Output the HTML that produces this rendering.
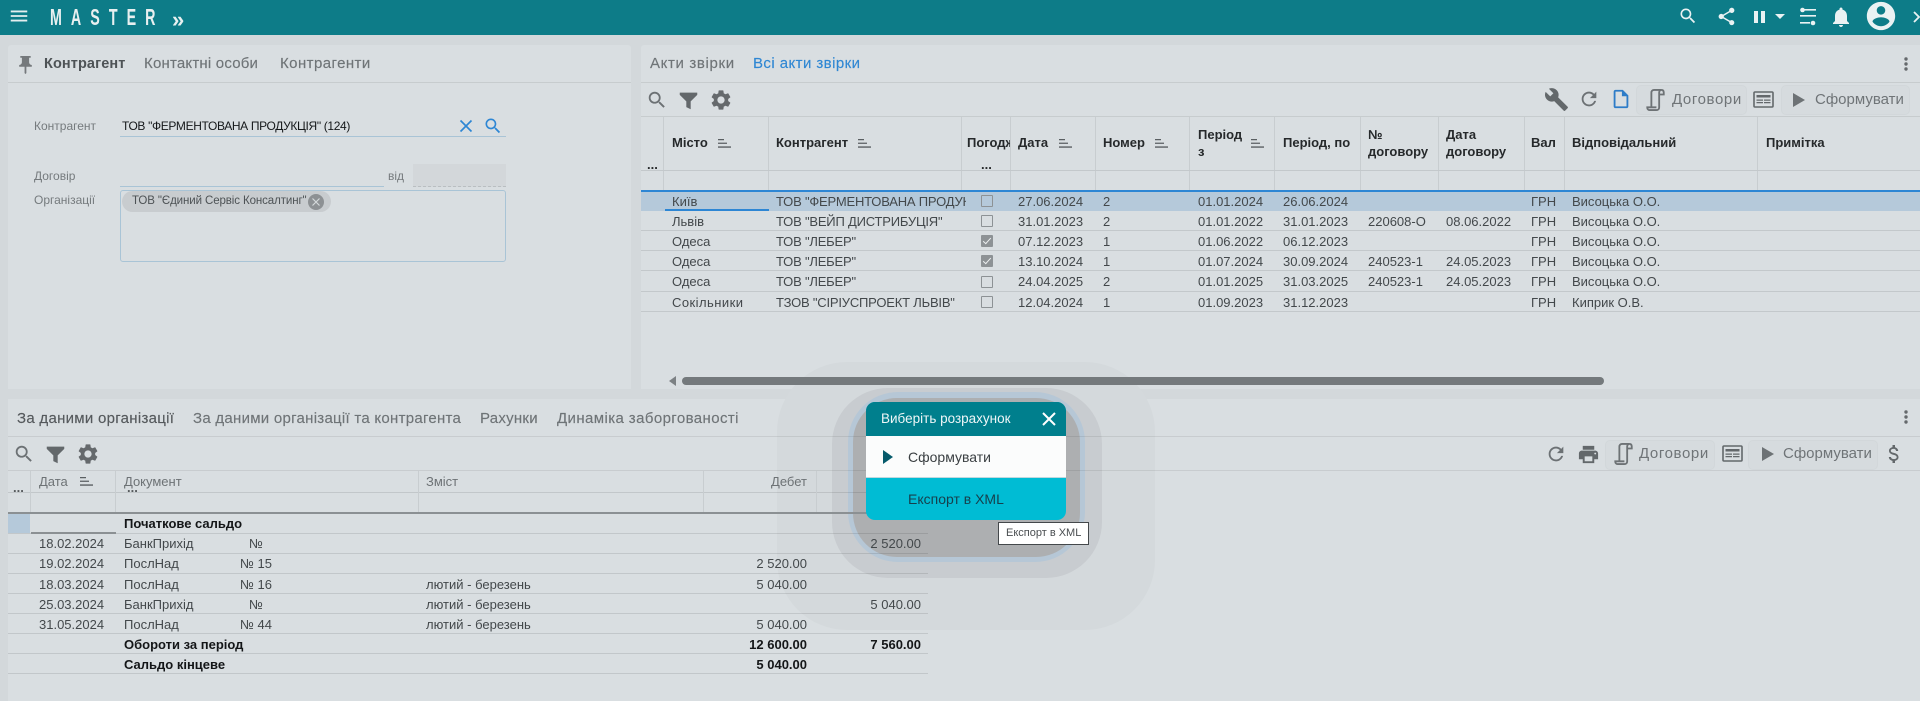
<!DOCTYPE html>
<html><head><meta charset="utf-8"><style>
html,body{margin:0;padding:0;width:1920px;height:701px;overflow:hidden;background:#d3d8db;font-family:"Liberation Sans",sans-serif}
.a{position:absolute}
.t{position:absolute;white-space:nowrap;line-height:16px;height:16px}
svg{position:absolute;overflow:visible}
.tab{font-size:15px;color:#6f7477;line-height:20px;height:20px;letter-spacing:.1px;-webkit-text-stroke:.15px currentColor}
.h{font-size:13px;font-weight:bold;color:#26292b}
.row{position:absolute;left:641px;width:1279px;height:20px;border-bottom:1px solid #c3c8cb;box-sizing:border-box}
.row span{position:absolute;top:3px;font-size:13px;line-height:16px;color:#43484b;white-space:nowrap}
.c1{left:31px}.c2{left:135px;width:190px;overflow:hidden;letter-spacing:-.2px}.c4{left:377px}.c5{left:462px}.c6{left:557px}.c7{left:642px}.c8{left:727px}.c9{left:805px}.c10{left:890px}.c11{left:931px}
.cb{position:absolute;left:340px;top:4px;width:10px;height:10px;border:1px solid #8d9295;border-radius:1px}
.cb.on{background:#8d9295}
.cb.on::after{content:"";position:absolute;left:3px;top:0;width:3px;height:7px;border:solid #eef1f2;border-width:0 1.5px 1.5px 0;transform:rotate(42deg)}
.row2{position:absolute;left:8px;width:920px;height:20px;border-bottom:1px solid rgba(0,0,0,.1);box-sizing:border-box}
.row2 span{position:absolute;top:2px;font-size:13px;line-height:16px;color:#43484b;white-space:nowrap}
.row2 b{position:absolute;top:2px;font-size:13px;line-height:16px;color:#141618;white-space:nowrap}
.d{left:31px}.e{left:116px}.f{left:218px;width:60px;text-align:center}.g{left:418px}.r1{right:121px}.r2{right:7px}
.sep{position:absolute;width:1px;background:#c8cdd0}
.btn{position:absolute;background:#d6dbde;border:1px solid #d2d7da;border-radius:5px;box-sizing:border-box}
</style></head><body>
<svg width="0" height="0" style="position:absolute"><defs>
<symbol id="sort" viewBox="0 0 13 9"><path d="M0 0h6v1.3H0zM0 3.6h9v1.3H0zM0 7.4h13v1.3H0z" fill="#5a5f62"/></symbol>
<symbol id="srch" viewBox="0 0 24 24"><path d="M15.5 14h-.79l-.28-.27C15.41 12.59 16 11.11 16 9.5 16 5.91 13.09 3 9.5 3S3 5.91 3 9.5 5.91 16 9.5 16c1.61 0 3.09-.59 4.23-1.57l.27.28v.79l5 4.99L20.49 19l-4.99-5zm-6 0C7.01 14 5 11.99 5 9.5S7.01 5 9.5 5 14 7.01 14 9.5 11.99 14 9.5 14z"/></symbol>
<symbol id="gear" viewBox="0 0 24 24"><path d="M19.14 12.94c.04-.3.06-.61.06-.94 0-.32-.02-.64-.07-.94l2.03-1.58a.49.49 0 0 0 .12-.61l-1.92-3.32a.488.488 0 0 0-.59-.22l-2.39.96c-.5-.38-1.03-.7-1.62-.94l-.36-2.54a.484.484 0 0 0-.48-.41h-3.84c-.24 0-.43.17-.47.41l-.36 2.54c-.59.24-1.13.57-1.62.94l-2.39-.96c-.22-.08-.47 0-.59.22L2.74 8.87c-.12.21-.08.47.12.61l2.03 1.58c-.05.3-.09.63-.09.94s.02.64.07.94l-2.03 1.58a.49.49 0 0 0-.12.61l1.92 3.32c.12.22.37.29.59.22l2.39-.96c.5.38 1.03.7 1.62.94l.36 2.54c.05.24.24.41.48.41h3.84c.24 0 .44-.17.47-.41l.36-2.54c.59-.24 1.13-.56 1.62-.94l2.39.96c.22.08.47 0 .59-.22l1.92-3.32c.12-.22.07-.47-.12-.61l-2.01-1.58zM12 15.6c-1.98 0-3.6-1.62-3.6-3.6s1.62-3.6 3.6-3.6 3.6 1.62 3.6 3.6-1.62 3.6-3.6 3.6z"/></symbol>
<symbol id="fun" viewBox="0 0 24 24"><path d="M2 3h20v2.5L14.5 13v9l-5-2.5V13L2 5.500z"/></symbol>
<symbol id="refr" viewBox="0 0 24 24"><path d="M17.65 6.35C16.2 4.9 14.21 4 12 4c-4.42 0-7.99 3.58-7.99 8s3.57 8 7.99 8c3.730 0 6.84-2.55 7.73-6h-2.08c-.82 2.33-3.04 4-5.65 4-3.31 0-6-2.69-6-6s2.69-6 6-6c1.66 0 3.14.69 4.22 1.78L13 11h7V4l-2.35 2.35z"/></symbol>
<symbol id="scrl" viewBox="0 0 19 24"><path d="M5 20V4c0-1.500 1-3 3-3h8c-1.500 0-2.500 1.500-2.500 3v16c0 1.600-1 3-3 3H3c-1.500 0-2.500-1.200-2.500-3H10.500" fill="none" stroke="#6d7275" stroke-width="2"/><path d="M16 1c1.500 0 2.500 1 2.500 3v2h-5" fill="none" stroke="#6d7275" stroke-width="2"/></symbol>
<symbol id="news" viewBox="0 0 21 17"><rect x="1" y="1" width="19" height="15" rx="1" fill="none" stroke="#63686b" stroke-width="1.600"/><path d="M3.500 4h14v2.500h-14zM3.500 8.500h6.500v1.200H3.500zM3.500 11h6.500v1.200H3.500zM11 8.500h6.500v1.200H11zM11 11h6.500v1.200H11z" fill="#63686b"/></symbol>
<symbol id="dots" viewBox="0 0 4 14"><circle cx="2" cy="2" r="1.700"/><circle cx="2" cy="7" r="1.700"/><circle cx="2" cy="12" r="1.700"/></symbol>
</defs></svg>

<!-- top bar -->
<div class="a" style="left:0;top:0;width:1920px;height:35px;background:#0d7c88"></div>
<svg style="left:8px;top:5px" width="22" height="22" viewBox="0 0 24 24" fill="#e4eeef"><path d="M3 18h18v-2H3v2zm0-5h18v-2H3v2zm0-7v2h18V6H3z"/></svg>
<div class="t" style="left:50px;top:5px;height:24px;line-height:24px;font-size:23px;color:#e8f0f0;font-weight:bold;transform:scaleX(.62);transform-origin:left;letter-spacing:14.6px;width:180px">MASTER</div>
<div class="t" style="left:172px;top:8px;height:24px;line-height:24px;font-size:22px;font-weight:bold;color:#e8f0f0">»</div>
<svg style="left:1678px;top:6px;fill:#eaf2f3" width="20" height="20"><use href="#srch"/></svg>
<svg style="left:1716px;top:6px" width="21" height="21" viewBox="0 0 24 24" fill="#eaf2f3"><path d="M18 16.080c-.76 0-1.440.3-1.960.77L8.910 12.700c.05-.23.09-.46.09-.7s-.04-.47-.09-.7l7.050-4.110c.54.5 1.250.81 2.040.81 1.660 0 3-1.340 3-3s-1.340-3-3-3-3 1.340-3 3c0 .24.04.47.09.7L8.040 9.810C7.500 9.310 6.790 9 6 9c-1.660 0-3 1.340-3 3s1.340 3 3 3c.79 0 1.500-.31 2.040-.81l7.120 4.160c-.05.21-.08.43-.08.65 0 1.610 1.310 2.920 2.920 2.920 1.610 0 2.920-1.310 2.920-2.920s-1.310-2.920-2.920-2.920z"/></svg>
<div class="a" style="left:1754px;top:11px;width:4px;height:12px;background:#eaf2f3"></div>
<div class="a" style="left:1761px;top:11px;width:4px;height:12px;background:#eaf2f3"></div>
<svg style="left:1775px;top:14px" width="10" height="5" fill="#eaf2f3"><path d="M0 0h10L5 5z"/></svg>
<svg style="left:1800px;top:8px" width="16" height="18" fill="#eaf2f3"><path d="M4 1h12v1.600H4zM0 7h16v1.600H0zM0 14h10v1.600H0z"/><circle cx="2.500" cy="2" r="2.300"/><circle cx="13" cy="15" r="2.300"/></svg>
<svg style="left:1831px;top:6px" width="20" height="22" viewBox="2 1 20 22" fill="#eaf2f3"><path d="M12 22c1.100 0 2-.9 2-2h-4c0 1.100.89 2 2 2zm6-6v-5c0-3.070-1.640-5.640-4.500-6.320V4c0-.83-.67-1.500-1.500-1.500s-1.500.67-1.500 1.500v.68C7.630 5.360 6 7.920 6 11v5l-2 2v1h16v-1l-2-2z"/></svg>
<svg style="left:1864px;top:-1px" width="34" height="34" viewBox="0 0 24 24" fill="#eaf2f3"><path d="M12 2C6.480 2 2 6.480 2 12s4.480 10 10 10 10-4.480 10-10S17.520 2 12 2zm0 3c1.660 0 3 1.340 3 3s-1.340 3-3 3-3-1.340-3-3 1.340-3 3-3zm0 14.200c-2.500 0-4.710-1.280-6-3.220.03-1.990 4-3.080 6-3.080 1.990 0 5.970 1.090 6 3.080-1.290 1.940-3.500 3.220-6 3.220z"/></svg>
<svg style="left:1913px;top:11px" width="7" height="12" fill="none" stroke="#eaf2f3" stroke-width="1.800"><path d="M1 1l5 5-5 5"/></svg>

<!-- left panel -->
<div class="a" style="left:8px;top:45px;width:623px;height:344px;background:#d9dee1;border-radius:3px 3px 0 0"></div>
<div class="a" style="left:8px;top:82px;width:623px;height:1px;background:#c7ccce"></div>
<svg style="left:18px;top:56px" width="15" height="18" viewBox="5 2 14 20" fill="#75797c"><path d="M16 9V4h1c.55 0 1-.45 1-1s-.45-1-1-1H7c-.55 0-1 .45-1 1s.45 1 1 1h1v5c0 1.660-1.340 3-3 3v2h5.970v7l1 1 1-1v-7H19v-2c-1.660 0-3-1.340-3-3z"/></svg>
<div class="t tab" style="left:44px;top:54px;color:#4e5356;font-weight:bold;font-size:14.500px;-webkit-text-stroke:0">Контрагент</div>
<div class="t tab" style="left:144px;top:54px;letter-spacing:.2px">Контактні особи</div>
<div class="t tab" style="left:280px;top:54px;letter-spacing:.43px">Контрагенти</div>
<div class="t" style="left:34px;top:118px;font-size:12px;color:#757a7d">Контрагент</div>
<div class="t" style="left:122px;top:118px;font-size:12px;letter-spacing:-.35px;color:#15181a">ТОВ "ФЕРМЕНТОВАНА ПРОДУКЦІЯ" (124)</div>
<div class="a" style="left:120px;top:136px;width:386px;height:1px;background:#a9c4d6"></div>
<svg style="left:460px;top:120px" width="12" height="12" stroke="#2d86d4" stroke-width="1.700" fill="none"><path d="M.5.5l11 11M11.500.5l-11 11"/></svg>
<svg style="left:483px;top:116px;fill:#2d86d4" width="20" height="20"><use href="#srch"/></svg>
<div class="t" style="left:34px;top:168px;font-size:12px;color:#757a7d">Договір</div>
<div class="a" style="left:120px;top:186px;width:264px;height:1px;background:#a9c4d6"></div>
<div class="t" style="left:388px;top:168px;font-size:12px;color:#757a7d">від</div>
<div class="a" style="left:413px;top:164px;width:93px;height:23px;background:#d3d7da;border-bottom:1px dashed #b9bec1;box-sizing:border-box"></div>
<div class="t" style="left:34px;top:192px;font-size:12px;color:#757a7d">Організації</div>
<div class="a" style="left:120px;top:190px;width:386px;height:72px;border:1px solid #a9c4d6;border-radius:3px;box-sizing:border-box"></div>
<div class="a" style="left:122px;top:191px;width:209px;height:21px;background:#c8cccf;border-radius:11px"></div>
<div class="t" style="left:132px;top:193px;font-size:11.500px;letter-spacing:-.1px;color:#4d5255">ТОВ "Єдиний Сервіс Консалтинг"</div>
<div class="a" style="left:308px;top:194px;width:16px;height:16px;background:#8d9194;border-radius:50%"></div>
<svg style="left:312px;top:198px" width="8" height="8" stroke="#d4d8da" stroke-width="1.200" fill="none"><path d="M.5.5l7 7M7.500.5l-7 7"/></svg>

<!-- right panel -->
<div class="a" style="left:641px;top:45px;width:1279px;height:344px;background:#d9dee1;border-radius:3px 0 0 0"></div>
<div class="a" style="left:641px;top:82px;width:1279px;height:1px;background:#c7ccce"></div>
<div class="t tab" style="left:650px;top:54px;letter-spacing:.65px">Акти звірки</div>
<div class="t tab" style="left:753px;top:54px;color:#2f87d3;letter-spacing:.43px">Всі акти звірки</div>
<svg style="left:1904px;top:57px;fill:#65696c" width="4" height="14"><use href="#dots"/></svg>
<div class="a" style="left:641px;top:116px;width:1279px;height:1px;background:#c7ccce"></div>
<svg style="left:646px;top:89px;fill:#6c7174" width="22" height="22"><use href="#srch"/></svg>
<svg style="left:678px;top:90px;fill:#63686b" width="21" height="21"><use href="#fun"/></svg>
<svg style="left:709px;top:88px;fill:#65696c" width="24" height="24"><use href="#gear"/></svg>
<svg style="left:1544px;top:87px" width="25" height="25" viewBox="0 0 24 24" fill="#63686b"><path d="M22.700 19l-9.100-9.100c.9-2.300.4-5-1.500-6.900-2-2-5-2.400-7.400-1.300L9 6 6 9 1.600 4.700C.4 7.100.9 10.100 2.900 12.100c1.900 1.900 4.600 2.400 6.900 1.500l9.100 9.100c.4.4 1 .4 1.400 0l2.300-2.300c.5-.4.5-1.100.1-1.400z"/></svg>
<svg style="left:1578px;top:88px;fill:#6c7174" width="22" height="22"><use href="#refr"/></svg>
<svg style="left:1610px;top:88px" width="22" height="22" viewBox="0 0 24 24" fill="#2d7cc8"><path d="M14 2H6c-1.100 0-2 .9-2 2v16c0 1.100.9 2 2 2h12c1.100 0 2-.9 2-2V8l-6-6zm4 18H6V4h7v5h5v11z"/></svg>
<div class="btn" style="left:1636px;top:85px;width:111px;height:30px"></div>
<svg style="left:1646px;top:89px" width="19" height="22"><use href="#scrl"/></svg>
<div class="t" style="left:1672px;top:90px;height:20px;line-height:20px;font-size:15px;letter-spacing:.6px;color:#6f7477">Договори</div>
<svg style="left:1753px;top:91px" width="21" height="17"><use href="#news"/></svg>
<div class="btn" style="left:1781px;top:85px;width:129px;height:30px"></div>
<svg style="left:1793px;top:93px" width="12" height="14" fill="#6d7275"><path d="M0 0l12 7-12 7z"/></svg>
<div class="t" style="left:1815px;top:90px;height:20px;line-height:20px;font-size:15px;color:#6f7477">Сформувати</div>

<!-- grid 1 headers -->
<div class="sep" style="left:663px;top:117px;height:73px"></div>
<div class="sep" style="left:768px;top:117px;height:73px"></div>
<div class="sep" style="left:961px;top:117px;height:73px"></div>
<div class="sep" style="left:1010px;top:117px;height:73px"></div>
<div class="sep" style="left:1095px;top:117px;height:73px"></div>
<div class="sep" style="left:1189px;top:117px;height:73px"></div>
<div class="sep" style="left:1274px;top:117px;height:73px"></div>
<div class="sep" style="left:1360px;top:117px;height:73px"></div>
<div class="sep" style="left:1438px;top:117px;height:73px"></div>
<div class="sep" style="left:1524px;top:117px;height:73px"></div>
<div class="sep" style="left:1564px;top:117px;height:73px"></div>
<div class="sep" style="left:1757px;top:117px;height:73px"></div>
<div class="a" style="left:641px;top:170px;width:1279px;height:1px;background:#c3c8cb"></div>
<div class="t h" style="left:672px;top:135px">Місто</div>
<svg style="left:718px;top:139px" width="13" height="9"><use href="#sort"/></svg>
<div class="t h" style="left:776px;top:135px">Контрагент</div>
<svg style="left:858px;top:139px" width="13" height="9"><use href="#sort"/></svg>
<div class="a" style="left:967px;top:135px;width:43px;height:16px;overflow:hidden"><div class="t h" style="left:0;top:0">Погодження</div></div>
<div class="t h" style="left:1018px;top:135px">Дата</div>
<svg style="left:1059px;top:139px" width="13" height="9"><use href="#sort"/></svg>
<div class="t h" style="left:1103px;top:135px">Номер</div>
<svg style="left:1155px;top:139px" width="13" height="9"><use href="#sort"/></svg>
<div class="t h" style="left:1198px;top:127px">Період</div>
<div class="t h" style="left:1198px;top:144px">з</div>
<svg style="left:1251px;top:139px" width="13" height="9"><use href="#sort"/></svg>
<div class="t h" style="left:1283px;top:135px">Період, по</div>
<div class="t h" style="left:1368px;top:127px">№</div>
<div class="t h" style="left:1368px;top:144px">договору</div>
<div class="t h" style="left:1446px;top:127px">Дата</div>
<div class="t h" style="left:1446px;top:144px">договору</div>
<div class="t h" style="left:1531px;top:135px">Вал</div>
<div class="t h" style="left:1572px;top:135px">Відповідальний</div>
<div class="t h" style="left:1766px;top:135px">Примітка</div>
<div class="t h" style="left:647px;top:157px">...</div>
<div class="t h" style="left:981px;top:157px">...</div>

<!-- grid 1 rows -->
<div class="a" style="left:641px;top:191px;width:1279px;height:20px;background:#b5c9da"></div>
<div class="a" style="left:641px;top:190px;width:1279px;height:2px;background:#2d86d4"></div>
<div class="a" style="left:665px;top:209px;width:104px;height:2px;background:#2d86d4"></div>
<div class="row" style="top:191px;border:0"><span class="c1">Київ</span><span class="c2">ТОВ "ФЕРМЕНТОВАНА ПРОДУКЦІЯ"</span><i class="cb"></i><span class="c4">27.06.2024</span><span class="c5">2</span><span class="c6">01.01.2024</span><span class="c7">26.06.2024</span><span class="c10">ГРН</span><span class="c11">Висоцька О.О.</span></div>
<div class="row" style="top:211px"><span class="c1">Львів</span><span class="c2">ТОВ "ВЕЙП ДИСТРИБУЦІЯ"</span><i class="cb"></i><span class="c4">31.01.2023</span><span class="c5">2</span><span class="c6">01.01.2022</span><span class="c7">31.01.2023</span><span class="c8">220608-О</span><span class="c9">08.06.2022</span><span class="c10">ГРН</span><span class="c11">Висоцька О.О.</span></div>
<div class="row" style="top:231px"><span class="c1">Одеса</span><span class="c2">ТОВ "ЛЕБЕР"</span><i class="cb on"></i><span class="c4">07.12.2023</span><span class="c5">1</span><span class="c6">01.06.2022</span><span class="c7">06.12.2023</span><span class="c10">ГРН</span><span class="c11">Висоцька О.О.</span></div>
<div class="row" style="top:251px"><span class="c1">Одеса</span><span class="c2">ТОВ "ЛЕБЕР"</span><i class="cb on"></i><span class="c4">13.10.2024</span><span class="c5">1</span><span class="c6">01.07.2024</span><span class="c7">30.09.2024</span><span class="c8">240523-1</span><span class="c9">24.05.2023</span><span class="c10">ГРН</span><span class="c11">Висоцька О.О.</span></div>
<div class="row" style="top:271px;height:21px"><span class="c1">Одеса</span><span class="c2">ТОВ "ЛЕБЕР"</span><i class="cb" style="top:5px"></i><span class="c4">24.04.2025</span><span class="c5">2</span><span class="c6">01.01.2025</span><span class="c7">31.03.2025</span><span class="c8">240523-1</span><span class="c9">24.05.2023</span><span class="c10">ГРН</span><span class="c11">Висоцька О.О.</span></div>
<div class="row" style="top:292px"><span class="c1" style="letter-spacing:.45px">Сокільники</span><span class="c2">ТЗОВ "СІРІУСПРОЕКТ ЛЬВІВ"</span><i class="cb"></i><span class="c4">12.04.2024</span><span class="c5">1</span><span class="c6">01.09.2023</span><span class="c7">31.12.2023</span><span class="c10">ГРН</span><span class="c11">Киприк О.В.</span></div>
<svg style="left:669px;top:376px" width="7" height="10" fill="#7c8184"><path d="M7 0v10L0 5z"/></svg>

<!-- bottom panel -->
<div class="a" style="left:8px;top:399px;width:1912px;height:302px;background:#d9dee1"></div>

<!-- modal shadow blobs (beneath the grid so text stays crisp) -->
<div class="a" style="left:777px;top:362px;width:378px;height:268px;background:#d4d9dc;border-radius:70px"></div>
<div class="a" style="left:832px;top:388px;width:270px;height:190px;background:#c8ccd0;border-radius:56px"></div>
<div class="a" style="left:848px;top:392px;width:237px;height:170px;background:#b6c7d6;border-radius:50px"></div>
<div class="a" style="left:853px;top:398px;width:227px;height:159px;background:#adafb1;border-radius:44px"></div>
<div class="a" style="left:682px;top:377px;width:922px;height:8px;background:#74797c;border-radius:4px"></div>

<div class="a" style="left:8px;top:436px;width:1912px;height:1px;background:rgba(0,0,0,.08)"></div>
<div class="t tab" style="left:17px;top:409px;color:#55595c;letter-spacing:.28px">За даними організації</div>
<div class="t tab" style="left:193px;top:409px;letter-spacing:.27px">За даними організації та контрагента</div>
<div class="t tab" style="left:480px;top:409px;letter-spacing:.25px">Рахунки</div>
<div class="t tab" style="left:557px;top:409px;letter-spacing:.4px">Динаміка заборгованості</div>
<svg style="left:1904px;top:410px;fill:#65696c" width="4" height="14"><use href="#dots"/></svg>
<svg style="left:13px;top:443px;fill:#6c7174" width="22" height="22"><use href="#srch"/></svg>
<svg style="left:45px;top:444px;fill:#63686b" width="21" height="21"><use href="#fun"/></svg>
<svg style="left:76px;top:442px;fill:#65696c" width="24" height="24"><use href="#gear"/></svg>
<svg style="left:1545px;top:443px;fill:#6c7174" width="22" height="22"><use href="#refr"/></svg>
<svg style="left:1577px;top:443px" width="23" height="23" viewBox="0 0 24 24" fill="#63686b"><path d="M19 8H5c-1.660 0-3 1.340-3 3v6h4v4h12v-4h4v-6c0-1.660-1.340-3-3-3zm-3 11H8v-5h8v5zm3-7c-.55 0-1-.45-1-1s.45-1 1-1 1 .45 1 1-.45 1-1 1zm-1-9H6v4h12V3z"/></svg>
<div class="btn" style="left:1605px;top:440px;width:110px;height:30px"></div>
<svg style="left:1614px;top:443px" width="19" height="22"><use href="#scrl"/></svg>
<div class="t" style="left:1639px;top:444px;height:20px;line-height:20px;font-size:15px;letter-spacing:.6px;color:#6f7477">Договори</div>
<svg style="left:1722px;top:445px" width="21" height="17"><use href="#news"/></svg>
<div class="btn" style="left:1748px;top:440px;width:130px;height:30px"></div>
<svg style="left:1762px;top:447px" width="12" height="14" fill="#6d7275"><path d="M0 0l12 7-12 7z"/></svg>
<div class="t" style="left:1783px;top:444px;height:20px;line-height:20px;font-size:15px;color:#6f7477">Сформувати</div>
<svg style="left:1882px;top:442px" width="24" height="24" viewBox="0 0 24 24" fill="#63686b"><path d="M11.800 10.900c-2.270-.59-3-1.200-3-2.150 0-1.090 1.010-1.850 2.700-1.850 1.780 0 2.440.85 2.500 2.100h2.210c-.07-1.720-1.120-3.300-3.210-3.810V3h-2.500v2.160c-1.940.42-3.500 1.680-3.500 3.610 0 2.310 1.910 3.460 4.700 4.130 2.500.6 3 1.480 3 2.410 0 .69-.49 1.790-2.700 1.790-2.060 0-2.870-.92-2.980-2.100h-2.200c.12 2.190 1.760 3.420 3.680 3.830V21h2.500v-2.150c1.950-.37 3.500-1.500 3.500-3.550 0-2.840-2.430-3.810-4.700-4.400z"/></svg>

<div class="a" style="left:8px;top:470px;width:1912px;height:1px;background:rgba(0,0,0,.08)"></div>
<div class="a" style="left:8px;top:492px;width:925px;height:1px;background:rgba(0,0,0,.1)"></div>
<div class="sep" style="left:30px;top:471px;height:41px"></div>
<div class="sep" style="left:115px;top:471px;height:41px"></div>
<div class="sep" style="left:418px;top:471px;height:41px"></div>
<div class="sep" style="left:703px;top:471px;height:41px"></div>
<div class="sep" style="left:816px;top:471px;height:41px"></div>
<div class="a" style="left:8px;top:512px;width:925px;height:2px;background:#8b9093"></div>
<div class="t" style="left:39px;top:474px;font-size:13px;color:#6d7275">Дата</div>
<svg style="left:80px;top:477px" width="13" height="9"><use href="#sort"/></svg>
<div class="t" style="left:124px;top:474px;font-size:13px;color:#6d7275">Документ</div>
<div class="t" style="left:426px;top:474px;font-size:13px;color:#6d7275">Зміст</div>
<div class="t" style="right:1113px;top:474px;font-size:13px;color:#6d7275">Дебет</div>
<div class="t h" style="left:13px;top:480px;color:#55595c">...</div>
<div class="t h" style="left:127px;top:480px;color:#55595c">...</div>
<div class="a" style="left:8px;top:514px;width:22px;height:19px;background:#b5c9da"></div>
<div class="row2" style="top:514px"><b class="e" style="top:2px">Початкове сальдо</b></div>
<div class="a" style="left:31px;top:532px;width:85px;height:2px;background:#8b9093"></div>
<div class="row2" style="top:534px"><span class="d">18.02.2024</span><span class="e">БанкПрихід</span><span class="f">№</span><span class="r2">2 520.00</span></div>
<div class="row2" style="top:554px"><span class="d">19.02.2024</span><span class="e">ПослНад</span><span class="f">№ 15</span><span class="r1">2 520.00</span></div>
<div class="row2" style="top:574px;"><span class="d" style="top:3px">18.03.2024</span><span class="e" style="top:3px">ПослНад</span><span class="f" style="top:3px">№ 16</span><span class="g" style="top:3px">лютий - березень</span><span class="r1" style="top:3px">5 040.00</span></div>
<div class="row2" style="top:594px"><span class="d" style="top:2.500px">25.03.2024</span><span class="e" style="top:2.500px">БанкПрихід</span><span class="f" style="top:2.500px">№</span><span class="g" style="top:2.500px">лютий - березень</span><span class="r2" style="top:2.500px">5 040.00</span></div>
<div class="row2" style="top:614px"><span class="d" style="top:2.500px">31.05.2024</span><span class="e" style="top:2.500px">ПослНад</span><span class="f" style="top:2.500px">№ 44</span><span class="g" style="top:2.500px">лютий - березень</span><span class="r1" style="top:2.500px">5 040.00</span></div>
<div class="row2" style="top:634px"><b class="e" style="top:2.500px">Обороти за період</b><b class="r1" style="top:2.500px">12 600.00</b><b class="r2" style="top:2.500px">7 560.00</b></div>
<div class="row2" style="top:654px"><b class="e" style="top:2.500px">Сальдо кінцеве</b><b class="r1" style="top:2.500px">5 040.00</b></div>

<!-- modal -->
<div class="a" style="left:866px;top:402px;width:200px;height:118px;background:#00bcd4;border-radius:9px;overflow:hidden">
  <div class="a" style="left:0;top:0;width:200px;height:34px;background:#007f8d"></div>
  <div class="a" style="left:0;top:34px;width:200px;height:42px;background:#fbfcfc;border-bottom:1px solid #c0d8de;box-sizing:border-box"></div>
</div>
<div class="t" style="left:881px;top:411px;font-size:13.500px;color:#eef6f7">Виберіть розрахунок</div>
<svg style="left:1043px;top:413px" width="12" height="12" stroke="#fff" stroke-width="2" fill="none"><path d="M0 0l12 12M12 0L0 12"/></svg>
<svg style="left:883px;top:450px" width="10" height="14" fill="#065a6b"><path d="M0 0l10 7-10 7z"/></svg>
<div class="t" style="left:908px;top:449px;font-size:14px;color:#3a3f42">Сформувати</div>
<div class="t" style="left:908px;top:491px;font-size:14px;color:#173f4c">Експорт в XML</div>
<div class="a" style="left:998px;top:522px;width:91px;height:23px;background:#fff;border:1px solid #44484b;box-sizing:border-box"></div>
<div class="t" style="left:1006px;top:525px;font-size:11px;color:#4a4e51">Експорт в XML</div>
</body></html>
